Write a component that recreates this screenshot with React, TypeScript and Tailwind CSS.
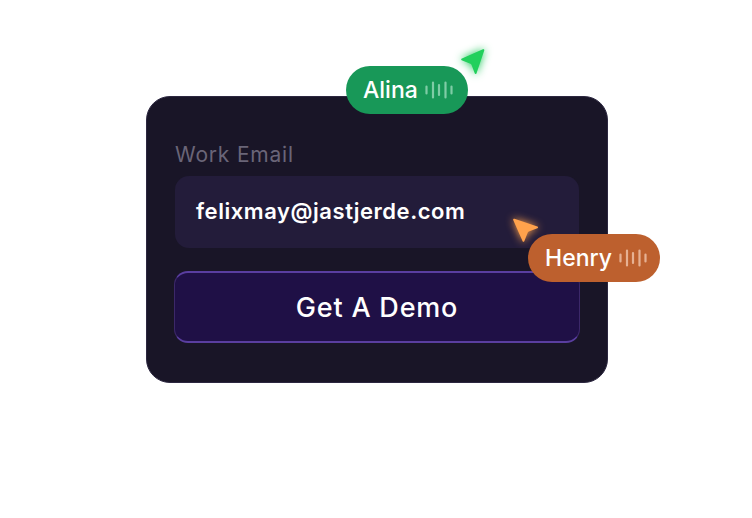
import React from 'react';

const Wave = ({ color }: { color: string }) => (
  <svg width="28" height="20" viewBox="0 0 28 20" fill="none" stroke={color} strokeWidth="2.2" strokeLinecap="round">
    <path d="M1.5 6.5v7M8 2.5v15M14 5v10M20.5 2.5v15M26.5 6.5v7" />
  </svg>
);

const Cursor = ({ fill, glow, className }: { fill: string; glow: string; className: string }) => (
  <svg className={className} width="40" height="40" viewBox="0 0 40 40" style={{ filter: `drop-shadow(0 0 4px ${glow})` }}>
    <path d="M8.5 8.8 31.4 16.6c.8.3.8 1.3 0 1.6l-8.6 3.2c-.5.2-.8.5-1 1l-3.5 8.8c-.3.8-1.4.8-1.7 0L7.2 10c-.3-.8.5-1.5 1.3-1.2Z" fill={fill} />
  </svg>
);

export default function App() {
  return (
    <div className="relative h-[518px] w-[752px] overflow-hidden bg-white pl-[146px] pt-[96px] font-['Inter',sans-serif]">
      <div className="h-[287px] w-[462px] rounded-[24px] border border-[#2c2740] bg-[#191527] px-[28px] pt-[44px]">
        <div className="text-[21px] leading-[27px] tracking-[0.8px] text-[#6a6578]">Work Email</div>
        <div className="mt-[8px] flex h-[72px] items-center rounded-[14px] bg-[#231c3a] px-[21px] pb-[2px] text-[22px] font-semibold tracking-[0.55px] text-white">
          felixmay@jastjerde.com
        </div>
        <button className="-ml-px mt-[23px] flex h-[72px] w-[406px] items-center justify-center rounded-[14px] border-x-[1.5px] border-y-2 border-x-[#3c2869] border-y-[#5a3ea0] bg-[#1f1046] pt-[2px] text-[27px] font-medium tracking-[0.8px] text-white">
          Get A Demo
        </button>
      </div>

      <div className="absolute left-[346px] top-[66px] flex h-[48px] w-[122px] items-center gap-[7px] rounded-full bg-[#189858] pl-[17px] text-[23px] font-medium text-white">
        Alina
        <Wave color="#7fcca6" />
      </div>
      <Cursor fill="#22d05c" glow="#1fc85a" className="absolute left-[453px] top-[42px] rotate-90" />

      <div className="absolute left-[528px] top-[234px] flex h-[48px] w-[132px] items-center gap-[7px] rounded-full bg-[#bd602e] pl-[17px] text-[23px] font-medium text-white">
        Henry
        <Wave color="#e6b193" />
      </div>
      <Cursor fill="#ffa24c" glow="#ffa24c" className="absolute left-[506px] top-[210px]" />
    </div>
  );
}
